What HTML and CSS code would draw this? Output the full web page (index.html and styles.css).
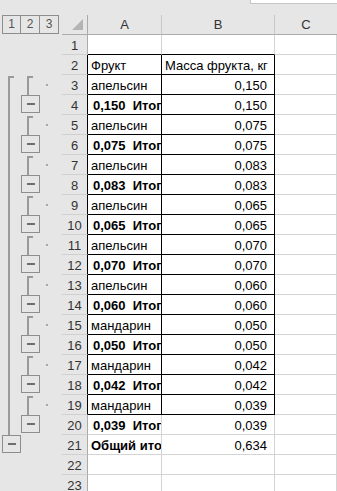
FILE: index.html
```
<!DOCTYPE html>
<html lang="ru">
<head>
<meta charset="utf-8">
<title>Итоги</title>
<link rel="stylesheet" href="styles.css">
</head>
<body>
<div class="topbar"><div class="namebox"></div></div>
<div class="sheet">
  <div class="levels"><span class="lvl">1</span><span class="lvl">2</span><span class="lvl">3</span></div>
  <div class="corner"><svg width="25" height="19" viewBox="0 0 25 19"><polygon points="21,4 21,15 10,15" fill="#b4b4b4"/></svg></div>
  <div class="ch">A</div>
  <div class="ch">B</div>
  <div class="ch chc">C</div>

  <div class="outline">
    <svg width="62" height="460" viewBox="0 35 62 460">
      <g fill="#9a9a9a">
        <rect x="8" y="76" width="6" height="2"/>
        <rect x="8" y="76" width="2" height="359"/>
      </g>
      <g id="g2" fill="#9a9a9a">
        <rect x="27" y="76" width="6" height="2"/><rect x="27" y="76" width="2" height="19"/>
        <rect x="27" y="116" width="6" height="2"/><rect x="27" y="116" width="2" height="19"/>
        <rect x="27" y="156" width="6" height="2"/><rect x="27" y="156" width="2" height="19"/>
        <rect x="27" y="196" width="6" height="2"/><rect x="27" y="196" width="2" height="19"/>
        <rect x="27" y="236" width="6" height="2"/><rect x="27" y="236" width="2" height="19"/>
        <rect x="27" y="276" width="6" height="2"/><rect x="27" y="276" width="2" height="19"/>
        <rect x="27" y="316" width="6" height="2"/><rect x="27" y="316" width="2" height="19"/>
        <rect x="27" y="356" width="6" height="2"/><rect x="27" y="356" width="2" height="19"/>
        <rect x="27" y="396" width="6" height="2"/><rect x="27" y="396" width="2" height="19"/>
      </g>
      <g fill="#a6a6a6">
        <rect x="46" y="84" width="2" height="2"/>
        <rect x="46" y="124" width="2" height="2"/>
        <rect x="46" y="164" width="2" height="2"/>
        <rect x="46" y="204" width="2" height="2"/>
        <rect x="46" y="244" width="2" height="2"/>
        <rect x="46" y="284" width="2" height="2"/>
        <rect x="46" y="324" width="2" height="2"/>
        <rect x="46" y="364" width="2" height="2"/>
        <rect x="46" y="404" width="2" height="2"/>
      </g>
      <g fill="none" stroke="#8e8e8e" stroke-width="1">
        <rect x="21.5" y="95.5" width="18" height="17"/>
        <rect x="21.5" y="135.5" width="18" height="17"/>
        <rect x="21.5" y="175.5" width="18" height="17"/>
        <rect x="21.5" y="215.5" width="18" height="17"/>
        <rect x="21.5" y="255.5" width="18" height="17"/>
        <rect x="21.5" y="295.5" width="18" height="17"/>
        <rect x="21.5" y="335.5" width="18" height="17"/>
        <rect x="21.5" y="375.5" width="18" height="17"/>
        <rect x="21.5" y="415.5" width="18" height="17"/>
        <rect x="2.5" y="435.5" width="18" height="17"/>
      </g>
      <g fill="#6e6e6e">
        <rect x="27" y="103" width="8" height="2"/>
        <rect x="27" y="143" width="8" height="2"/>
        <rect x="27" y="183" width="8" height="2"/>
        <rect x="27" y="223" width="8" height="2"/>
        <rect x="27" y="263" width="8" height="2"/>
        <rect x="27" y="303" width="8" height="2"/>
        <rect x="27" y="343" width="8" height="2"/>
        <rect x="27" y="383" width="8" height="2"/>
        <rect x="27" y="423" width="8" height="2"/>
        <rect x="8" y="443" width="8" height="2"/>
      </g>
    </svg>
  </div>

  <div class="rh">1</div><div class="c a top"></div><div class="c b top"></div><div class="c"></div>
  <div class="rh in">2</div><div class="c a t">Фрукт</div><div class="c b t">Масса фрукта, кг</div><div class="c"></div>
  <div class="rh in">3</div><div class="c a t">апельсин</div><div class="c b t num">0,150</div><div class="c"></div>
  <div class="rh in">4</div><div class="c a t sum">0,150  Итог</div><div class="c b t num">0,150</div><div class="c"></div>
  <div class="rh in">5</div><div class="c a t">апельсин</div><div class="c b t num">0,075</div><div class="c"></div>
  <div class="rh in">6</div><div class="c a t sum">0,075  Итог</div><div class="c b t num">0,075</div><div class="c"></div>
  <div class="rh in">7</div><div class="c a t">апельсин</div><div class="c b t num">0,083</div><div class="c"></div>
  <div class="rh in">8</div><div class="c a t sum">0,083  Итог</div><div class="c b t num">0,083</div><div class="c"></div>
  <div class="rh in">9</div><div class="c a t">апельсин</div><div class="c b t num">0,065</div><div class="c"></div>
  <div class="rh in">10</div><div class="c a t sum">0,065  Итог</div><div class="c b t num">0,065</div><div class="c"></div>
  <div class="rh in">11</div><div class="c a t">апельсин</div><div class="c b t num">0,070</div><div class="c"></div>
  <div class="rh in">12</div><div class="c a t sum">0,070  Итог</div><div class="c b t num">0,070</div><div class="c"></div>
  <div class="rh in">13</div><div class="c a t">апельсин</div><div class="c b t num">0,060</div><div class="c"></div>
  <div class="rh in">14</div><div class="c a t sum">0,060  Итог</div><div class="c b t num">0,060</div><div class="c"></div>
  <div class="rh in">15</div><div class="c a t">мандарин</div><div class="c b t num">0,050</div><div class="c"></div>
  <div class="rh in">16</div><div class="c a t sum">0,050  Итог</div><div class="c b t num">0,050</div><div class="c"></div>
  <div class="rh in">17</div><div class="c a t">мандарин</div><div class="c b t num">0,042</div><div class="c"></div>
  <div class="rh in">18</div><div class="c a t sum">0,042  Итог</div><div class="c b t num">0,042</div><div class="c"></div>
  <div class="rh in">19</div><div class="c a t">мандарин</div><div class="c b t num">0,039</div><div class="c"></div>
  <div class="rh">20</div><div class="c a sum">0,039  Итог</div><div class="c b num">0,039</div><div class="c"></div>
  <div class="rh">21</div><div class="c a bold">Общий итог</div><div class="c b num">0,634</div><div class="c"></div>
  <div class="rh">22</div><div class="c a"></div><div class="c b"></div><div class="c"></div>
  <div class="rh">23</div><div class="c a"></div><div class="c b"></div><div class="c"></div>
</div>
</body>
</html>
```
FILE: styles.css
```
html, body {
  margin: 0;
  padding: 0;
}
body {
  background: #e6e6e6;
  font-family: "Liberation Sans", Arial, sans-serif;
  font-size: 13px;
  color: #000;
  overflow: hidden;
  width: 337px;
  height: 491px;
}
.topbar {
  height: 15px;
  display: flex;
  justify-content: flex-end;
}
.namebox {
  width: 87px;
  height: 4px;
  background: #fff;
  border-left: 1px solid #c6c6c6;
  border-bottom: 1px solid #c6c6c6;
  box-sizing: border-box;
}
.sheet {
  display: grid;
  grid-template-columns: 62px 26px 74px 113px 1fr;
  grid-auto-rows: 20px;
}
.levels {
  display: flex;
  padding-left: 2px;
  height: 19px;
}
.lvl {
  box-sizing: border-box;
  width: 19px;
  height: 19px;
  border: 1px solid #8e8e8e;
  border-left: none;
  color: #555;
  font-size: 12px;
  line-height: 17px;
  text-align: center;
}
.lvl:first-child {
  border-left: 1px solid #8e8e8e;
}
.corner {
  box-sizing: border-box;
  border-right: 1px solid #ababab;
  border-bottom: 1px solid #ababab;
}
.corner svg { display: block; }
.ch {
  box-sizing: border-box;
  border-right: 1px solid #c8c8c8;
  border-bottom: 1px solid #ababab;
  text-align: center;
  color: #333;
  padding-top: 1px;
  line-height: 17px;
}
.chc { border-right: none; }
.outline {
  grid-column: 1;
  grid-row: 2 / span 23;
}
.outline svg { display: block; }
.rh {
  grid-column: 2;
  box-sizing: border-box;
  border-right: 1px solid #ababab;
  border-bottom: 1px solid #d0d0d0;
  text-align: center;
  color: #333;
  padding-top: 2px;
  line-height: 17px;
}
.rh.in { border-right-color: #000; }
.c {
  box-sizing: border-box;
  background: #fff;
  border-right: 1px solid #d4d4d4;
  border-bottom: 1px solid #d4d4d4;
  padding: 2px 3px 0 3px;
  line-height: 17px;
  white-space: pre;
  overflow: hidden;
}
.c.top { border-bottom-color: #000; }
.c.t { border-right-color: #000; border-bottom-color: #000; }
.num { text-align: right; padding-right: 7px; }
.sum { font-weight: bold; padding-left: 5px; }
.bold { font-weight: bold; }
```
